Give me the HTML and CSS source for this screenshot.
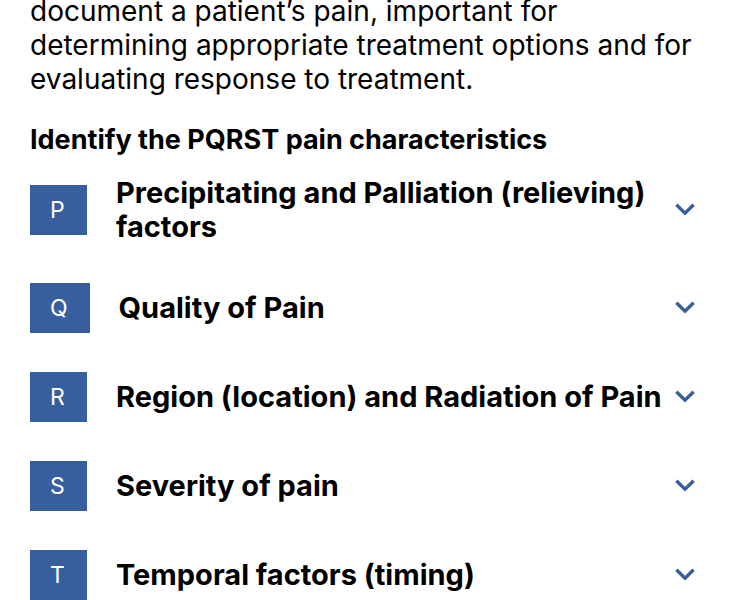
FILE: index.html
```html
<!DOCTYPE html>
<html lang="en">
<head>
<meta charset="utf-8">
<meta name="viewport" content="width=device-width, initial-scale=1">
<title>PQRST pain assessment</title>
<link rel="stylesheet" href="styles.css">
</head>
<body>
<main class="page">
  <p class="intro">document a patient’s pain, important for determining appropriate treatment options and for evaluating response to treatment.</p>
  <h2 class="heading">Identify the PQRST pain characteristics</h2>
  <div class="list">
    <button type="button" class="item" aria-expanded="false"><span class="badge">P</span><span class="label">Precipitating and Palliation (relieving) factors</span><svg class="chevron" viewBox="0 0 20 14" aria-hidden="true"><path d="M1.4 1.8 10 10.2l8.6-8.4"/></svg></button>
    <button type="button" class="item" aria-expanded="false"><span class="badge">Q</span><span class="label">Quality of Pain</span><svg class="chevron" viewBox="0 0 20 14" aria-hidden="true"><path d="M1.4 1.8 10 10.2l8.6-8.4"/></svg></button>
    <button type="button" class="item" aria-expanded="false"><span class="badge">R</span><span class="label">Region (location) and Radiation of Pain</span><svg class="chevron" viewBox="0 0 20 14" aria-hidden="true"><path d="M1.4 1.8 10 10.2l8.6-8.4"/></svg></button>
    <button type="button" class="item" aria-expanded="false"><span class="badge">S</span><span class="label">Severity of pain</span><svg class="chevron" viewBox="0 0 20 14" aria-hidden="true"><path d="M1.4 1.8 10 10.2l8.6-8.4"/></svg></button>
    <button type="button" class="item" aria-expanded="false"><span class="badge">T</span><span class="label">Temporal factors (timing)</span><svg class="chevron" viewBox="0 0 20 14" aria-hidden="true"><path d="M1.4 1.8 10 10.2l8.6-8.4"/></svg></button>
  </div>
</main>
</body>
</html>
```
FILE: styles.css
```css
* {
  box-sizing: border-box;
}

body {
  margin: 0;
  background: #fff;
  color: #000;
  font-family: Inter, sans-serif;
}

.page {
  padding: 0 55px 0 30px;
}

.intro {
  margin: -6px 0 0;
  font-size: 28px;
  line-height: 34px;
}

.heading {
  margin: 27px 0 0;
  font-size: 27px;
  font-weight: 700;
  line-height: 34px;
}

.list {
  display: grid;
  gap: 39px;
  margin-top: 19px;
}

.item {
  display: flex;
  align-items: center;
  width: 100%;
  padding: 0;
  border: 0;
  background: none;
  color: inherit;
  font-family: inherit;
  text-align: left;
}

.badge {
  flex: none;
  min-width: 57px;
  margin-right: 29px;
  padding: 0 22px 0 20px;
  background: #375f9d;
  color: #fff;
  font-size: 23px;
  line-height: 50px;
}

.label {
  flex: 1;
  font-size: 29px;
  font-weight: 700;
  line-height: 34px;
}

.chevron {
  flex: none;
  width: 20px;
  height: 14px;
  fill: none;
  stroke: #375f9d;
  stroke-width: 3.4;
}
```
